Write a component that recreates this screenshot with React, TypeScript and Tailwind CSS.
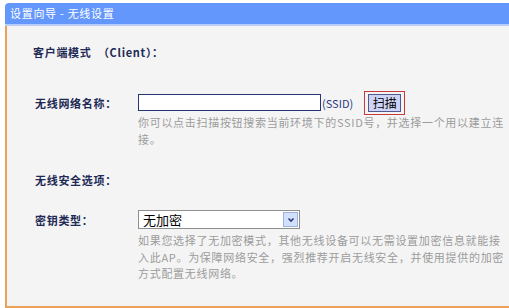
import React from "react";

const F = { fontFamily: '"Noto Sans CJK SC", "Noto Sans", sans-serif' };

export default function App() {
  return (
    <div
      className="w-[509px] h-[308px] overflow-hidden bg-white pl-[5px] pt-[3px] flex flex-col text-[11px] tracking-[0.7px]"
      style={F}
    >
      <div className="h-[21px] shrink-0 bg-[#6497fb] rounded-tl-[4px] text-white pl-[5px] flex items-center leading-none">
        设置向导 - 无线设置
      </div>
      <div className="h-[2px] shrink-0 bg-[#b9cdf9]" />
      <div className="flex-1 border-l-2 border-b-2 border-[#e9a257] bg-[#f4f4f4] pt-[18px] pl-[28px] flex flex-col">
        <div className="h-[16px] leading-[16px] font-bold text-[#1e2a55] -ml-[2px]">
          客户端模式&nbsp;&nbsp;（Client）：
        </div>

        <div className="mt-[34px] h-[17px] flex items-center">
          <div className="w-[103px] shrink-0 font-bold text-[#1e2a55] leading-[16px]">
            无线网络名称：
          </div>
          <div className="w-[183px] h-[17px] shrink-0 border border-[#24367a] bg-white" />
          <div className="ml-[1px] text-[#2a3a85] leading-[16px] tracking-normal">(SSID)</div>
          <div className="ml-[11px] h-[24px] w-[41px] border border-[#c83a3a] flex items-center justify-center">
            <div className="h-[18px] w-[33px] border border-[#505a90] bg-[#cfd3f6] text-black text-[12px] leading-none tracking-normal flex items-center justify-center">
              扫描
            </div>
          </div>
        </div>

        <div className="ml-[103px] mt-[3px] text-[#9c9c9c] leading-[17px] whitespace-nowrap">
          你可以点击扫描按钮搜索当前环境下的SSID号，并选择一个用以建立连
          <br />
          接。
        </div>

        <div className="mt-[24px] h-[16px] leading-[16px] font-bold text-[#1e2a55]">
          无线安全选项：
        </div>

        <div className="mt-[22px] h-[19px] flex items-center">
          <div className="w-[103px] shrink-0 font-bold text-[#1e2a55] leading-[16px]">
            密钥类型：
          </div>
          <div className="w-[162px] h-[19px] shrink-0 border border-[#8f8f8f] bg-white flex items-center justify-between pl-[4px] pr-[1px]">
            <span className="text-[13px] text-black leading-none tracking-normal">无加密</span>
            <div className="w-[15px] h-[15px] border border-[#9db2e2] bg-[#d3e0fb] flex items-center justify-center">
              <svg width="8" height="6" viewBox="0 0 8 6">
                <path d="M1.5 1.5 L4 4 L6.5 1.5" stroke="#2b3f80" strokeWidth="1.6" fill="none" />
              </svg>
            </div>
          </div>
        </div>

        <div className="ml-[103px] mt-[3px] text-[#9c9c9c] leading-[16.5px] whitespace-nowrap">
          如果您选择了无加密模式，其他无线设备可以无需设置加密信息就能接
          <br />
          入此AP。为保障网络安全，强烈推荐开启无线安全，并使用提供的加密
          <br />
          方式配置无线网络。
        </div>
      </div>
    </div>
  );
}
